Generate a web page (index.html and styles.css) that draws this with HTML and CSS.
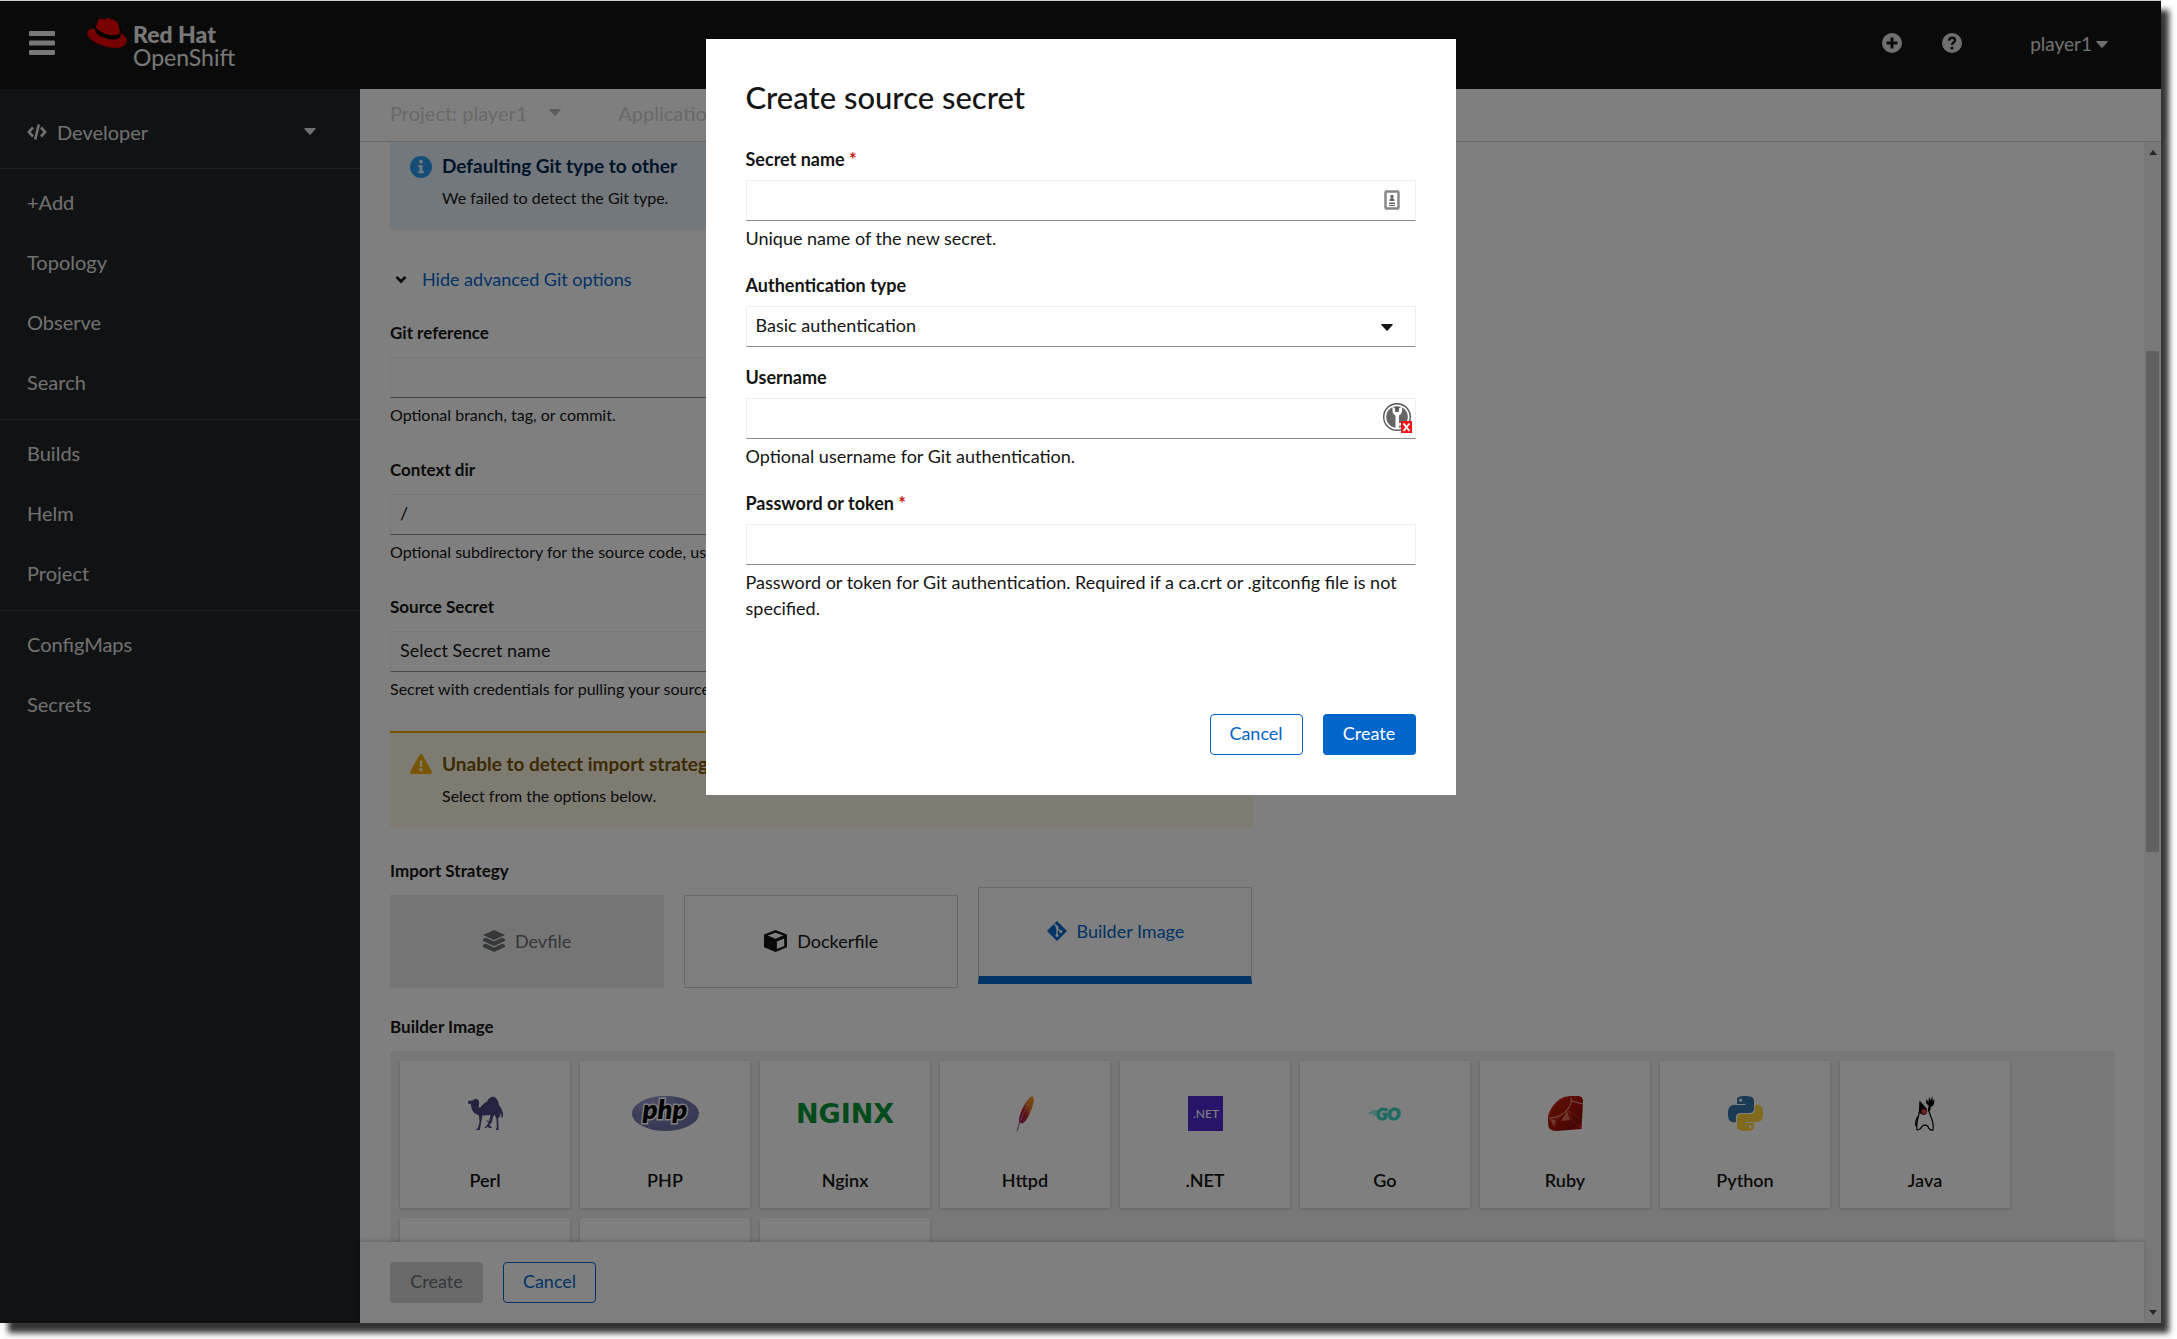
FILE: index.html
```
<!DOCTYPE html>
<html lang="en">
<head>
<meta charset="utf-8">
<title>Red Hat OpenShift - Import from Git</title>
<link rel="stylesheet" href="styles.css">
</head>
<body>
<svg class="sprite" aria-hidden="true">
  <symbol id="caret" viewBox="0 0 12 7"><path d="M.8 0h10.4q.9.3.4 1L6.6 6.6q-.6.6-1.2 0L.4 1Q0 .3.8 0z" fill="currentColor"/></symbol>
</svg>
<div class="window">
  <header class="masthead">
    <button class="icon-button menu-button" type="button" aria-label="Global navigation">
      <svg width="26" height="24" viewBox="0 0 26 24" fill="currentColor"><rect width="26" height="5" rx="1"/><rect y="9.500" width="26" height="5" rx="1"/><rect y="19" width="26" height="5" rx="1"/></svg>
    </button>
    <a class="brand" href="#">
      <svg width="40" height="30" viewBox="0 2.900 24 18.200"><path d="M4 8h16.500v9H9z" fill="#000"/><path fill="#e00" d="M16.009 13.386c1.577 0 3.86-.326 3.86-2.202a1.765 1.765 0 0 0-.04-.431l-.94-4.08c-.216-.898-.406-1.305-1.982-2.093-1.223-.625-3.888-1.658-4.676-1.658-.733 0-.947.946-1.822.946-.842 0-1.467-.706-2.255-.706-.757 0-1.250.515-1.630 1.576 0 0-1.060 2.990-1.197 3.424a.81.81 0 0 0-.028.245c0 1.162 4.577 4.974 10.710 4.974m4.101-1.435c.218 1.032.218 1.140.218 1.277 0 1.765-1.984 2.745-4.593 2.745-5.895.004-11.060-3.451-11.060-5.734a2.326 2.326 0 0 1 .19-.925C2.746 9.415 0 9.794 0 12.217c0 3.969 9.405 8.861 16.851 8.861 5.710 0 7.149-2.582 7.149-4.620 0-1.605-1.387-3.425-3.887-4.512"/></svg>
      <span class="brand-name"><strong>Red Hat</strong><span>OpenShift</span></span>
    </a>
    <div class="masthead-tools">
      <button class="icon-button" type="button" aria-label="Import">
        <svg width="20" height="20" viewBox="0 0 20 20"><circle cx="10" cy="10" r="10" fill="currentColor"/><path d="M10 4.500v11M4.500 10h11" stroke="#151515" stroke-width="3"/></svg>
      </button>
      <button class="icon-button" type="button" aria-label="Help">
        <svg width="20" height="20" viewBox="0 0 20 20"><circle cx="10" cy="10" r="10" fill="currentColor"/><path d="M6.900 7.600C7.600 3.700 13 4 13 7.300c0 2.400-3 2.100-3 4.600" fill="none" stroke="#151515" stroke-width="2.300"/><circle cx="10" cy="15" r="1.600" fill="#151515"/></svg>
      </button>
      <button class="user-menu" type="button">player1<svg width="12" height="7"><use href="#caret"/></svg></button>
    </div>
  </header>

  <div class="body">
    <nav class="sidebar">
      <button class="perspective" type="button">
        <svg width="20" height="16" viewBox="0 0 20 16" fill="none" stroke="currentColor" stroke-width="2.600"><path d="M6 3.500 1.900 8 6 12.500M14 3.500 18.100 8 14 12.500M11.800.5 8.200 15.500"/></svg>
        <span>Developer</span>
        <svg class="perspective-caret" width="12" height="7"><use href="#caret"/></svg>
      </button>
      <ul class="nav-group"><li><a href="#">+Add</a></li><li><a href="#">Topology</a></li><li><a href="#">Observe</a></li><li><a href="#">Search</a></li></ul>
      <ul class="nav-group"><li><a href="#">Builds</a></li><li><a href="#">Helm</a></li><li><a href="#">Project</a></li></ul>
      <ul class="nav-group"><li><a href="#">ConfigMaps</a></li><li><a href="#">Secrets</a></li></ul>
    </nav>

    <main class="main">
      <div class="context-bar">
        <button type="button" disabled>Project: player1<svg width="12" height="7"><use href="#caret"/></svg></button>
        <button type="button" disabled>Application: All applications<svg width="12" height="7"><use href="#caret"/></svg></button>
      </div>
      <div class="content">
        <div class="page">
          <form class="import-form">
            <section class="alert alert-info">
              <svg width="22" height="22" viewBox="0 0 22 22"><circle cx="11" cy="11" r="11" fill="#2b9af3"/><circle cx="11" cy="5.700" r="1.900" fill="#e7f1fa"/><path d="M8.200 9h4.300v6h1.300v2.200H8.200V15h1.300v-3.800H8.200z" fill="#e7f1fa"/></svg>
              <div><h4>Defaulting Git type to other</h4><p>We failed to detect the Git type.</p></div>
            </section>
            <button class="toggle" type="button"><svg width="12" height="9" viewBox="0 0 12 9"><path d="m1.500 1.800 4.500 4.700 4.500-4.700" fill="none" stroke="#151515" stroke-width="2.600"/></svg><span>Hide advanced Git options</span></button>
            <div class="field">
              <label for="git-ref">Git reference</label>
              <div class="control"><input id="git-ref" type="text"></div>
              <p class="help">Optional branch, tag, or commit.</p>
            </div>
            <div class="field">
              <label for="context-dir">Context dir</label>
              <div class="control"><input id="context-dir" type="text" value="/"></div>
              <p class="help">Optional subdirectory for the source code, used as a context directory for build.</p>
            </div>
            <div class="field">
              <label for="source-secret">Source Secret</label>
              <div class="control"><select id="source-secret"><option>Select Secret name</option></select><svg class="select-caret" width="12" height="7"><use href="#caret"/></svg></div>
              <p class="help">Secret with credentials for pulling your source code.</p>
            </div>
            <section class="alert alert-warning">
              <svg width="22" height="20" viewBox="0 0 22 20"><path d="M9.500.9q1.500-1.800 3 0l9.200 16.500q.8 2-1.400 2.600H1.700q-2.200-.6-1.400-2.600z" fill="#f0ab00"/><path d="M9.600 6.500h2.800l-.4 6.500h-2z" fill="#fdf7e7"/><circle cx="11" cy="15.800" r="1.700" fill="#fdf7e7"/></svg>
              <div><h4>Unable to detect import strategy</h4><p>Select from the options below.</p></div>
            </section>
            <h3 class="group-label">Import Strategy</h3>
            <div class="tiles">
              <button class="tile tile-disabled" type="button" disabled>
                <svg width="22" height="22" viewBox="0 0 22 22" fill="currentColor"><path d="M11 0 22 5 11 10 0 5zM0 9l2.700-1.200L11 11.600l8.300-3.800L22 9v2l-11 5L0 11zM0 15l2.700-1.200L11 17.600l8.300-3.800L22 15v2l-11 5L0 17z"/></svg>Devfile
              </button>
              <button class="tile" type="button">
                <svg width="23" height="22" viewBox="0 0 23 22"><path d="M11.500 0 23 4.500v12.700L11.500 22 0 17.200V4.500z" fill="#151515"/><path d="M11.500 2.800 19.300 5.600 11.500 8.800 3.700 5.600zM12.900 11.400l7.300-3v7.500l-7.300 3z" fill="#fff"/></svg>Dockerfile
              </button>
              <button class="tile tile-selected" type="button">
                <svg width="20" height="20" viewBox="0 0 20 20"><path d="M10 0l10 10-10 10L0 10z" fill="currentColor"/><path d="M7.500 3 10 5.700V15M10 7l4 4" stroke="#fff" stroke-width="1.400" fill="none"/><circle cx="10" cy="6" r="1.500" fill="#fff"/><circle cx="10" cy="14.500" r="1.500" fill="#fff"/><circle cx="13.800" cy="10.500" r="1.500" fill="#fff"/></svg>Builder Image
              </button>
            </div>
            <h3 class="group-label">Builder Image</h3>
            <div class="catalog">
              <button class="card" type="button">
                <svg width="35" height="33" viewBox="0 0 35 33" fill="#484880"><path d="M0 4.500 2 3.600 5 3.500Q6.500 1 9 2.200L11 4Q11.500 7 10.500 9.500 11.500 12 13.500 9 16 5.500 19 4.500 22-1 26.500 0 30 2 31 8L33.500 12Q35.500 15 34.800 20L33.500 21 33 15.500 32 19 30.200 21.500 30.500 31.500 31 33H27.500L28.800 30.500 28.500 22 26.500 17.500 25 20 24 25 21.500 28 24 31H21L19.500 29.500 18 31H16.500L20.500 26 18 23 21 24.500 22.500 18 14.500 18.500 13.500 24 12 31.500V33H7.500L10 31 11.500 25 11 18.500 7 16.500Q3.500 14 2.700 7L0 6.500z"/></svg>
                <span>Perl</span>
              </button>
              <button class="card" type="button">
                <svg width="67" height="35" viewBox="0 0 67 35"><defs><radialGradient id="php-fill" cx=".3" cy=".2" r=".8"><stop offset="0" stop-color="#9a9cd0"/><stop offset=".5" stop-color="#7b7db5"/><stop offset="1" stop-color="#7173aa"/></radialGradient></defs><ellipse cx="33.500" cy="17.500" rx="33.500" ry="17.500" fill="url(#php-fill)"/><text class="php-text" x="33" y="23" text-anchor="middle">php</text></svg>
                <span>PHP</span>
              </button>
              <button class="card" type="button">
                <svg width="98" height="35" viewBox="0 0 98 35"><text class="nginx-text" x="49" y="27" text-anchor="middle">NGINX</text></svg>
                <span>Nginx</span>
              </button>
              <button class="card" type="button">
                <svg width="18" height="35" viewBox="0 0 18 35"><defs><linearGradient id="feather" x1="1" y1="0" x2="0" y2="1"><stop offset="0" stop-color="#f69923"/><stop offset=".3" stop-color="#e97826"/><stop offset=".5" stop-color="#be202e"/><stop offset=".75" stop-color="#9e2064"/><stop offset="1" stop-color="#662d91"/></linearGradient></defs><path d="M16 0q2.500 1.500 1.700 6-.7 4-4 11.500Q10.500 25 6.500 27.500L4 27 1.500 35H.6L3 26.500Q2.500 21 6 13.500 10.500 3.500 16 0z" fill="url(#feather)"/><path d="M14.500 4Q9 13 4.500 24.500L1 35" fill="none" stroke="#d9b8c8" stroke-width=".7" stroke-dasharray="3 1"/></svg>
                <span>Httpd</span>
              </button>
              <button class="card" type="button">
                <svg width="35" height="35" viewBox="0 0 35 35"><path d="M0 0h35v35H0z" fill="#512bd4"/><text class="net-text" x="18" y="22" text-anchor="middle">.NET</text></svg>
                <span>.NET</span>
              </button>
              <button class="card" type="button">
                <svg width="32" height="35" viewBox="0 0 32 35"><path d="M2 15h6M0 17h7M4 19h3" stroke="#35d6c4" stroke-width="1"/><text class="go-text" x="7" y="24">GO</text></svg>
                <span>Go</span>
              </button>
              <button class="card" type="button">
                <svg width="35" height="35" viewBox="0 0 35 35"><defs><linearGradient id="ruby" x1="0" y1="0" x2="1" y2="1"><stop offset="0" stop-color="#d83020"/><stop offset=".5" stop-color="#b01208"/><stop offset=".8" stop-color="#8c0c04"/><stop offset="1" stop-color="#d81808"/></linearGradient></defs><path d="M22 0h9q4 1 4 5l-1.500 28L8 35q-8 0-8-8v-7Q3 9 12 3q5-3 10-3z" fill="url(#ruby)"/><path d="M2 21Q4 11 12 5q7-5 10-3 2 3-3 10-8 9-17 9z" fill="#b01a08"/><path d="M1.500 22Q12 22 19.500 13.500 24.500 7 23 2M24 5l11 3" fill="none" stroke="#f0b0a0" stroke-width="1"/><path d="m20 14-11.500 9-2 11M20 14l5 11 9 8M20 14l14 10" fill="none" stroke="#d86050" stroke-width=".5"/><path d="m2 23 5.500 1L6 31zM19 15l3 9-9 1z" fill="#e07060"/></svg>
                <span>Ruby</span>
              </button>
              <button class="card" type="button">
                <svg width="35" height="35" viewBox="0 0 24 24"><path fill="#3776ab" d="M14.250.18l.9.2.73.26.59.3.45.32.34.34.25.34.16.33.1.3.04.26.02.2-.01.13V8.500l-.05.63-.13.55-.21.46-.26.38-.3.31-.33.25-.35.19-.35.14-.33.1-.3.07-.26.04-.21.02H8.770l-.69.05-.59.14-.5.22-.41.27-.33.32-.27.35-.2.36-.15.37-.1.35-.07.32-.04.27-.02.21v3.060H3.170l-.21-.03-.28-.07-.32-.12-.35-.18-.36-.26-.36-.36-.35-.46-.32-.59-.28-.73-.21-.88-.14-1.050-.05-1.230.06-1.220.16-1.040.24-.87.32-.71.36-.57.4-.44.42-.33.42-.24.4-.16.36-.1.32-.05.24-.01h.16l.06.01h8.160v-.83H6.180l-.01-2.750-.02-.37.05-.34.11-.31.17-.28.25-.26.31-.23.38-.2.44-.18.51-.15.58-.12.64-.1.71-.06.77-.04.84-.02 1.270.05zm-6.300 1.980l-.23.33-.08.41.08.41.23.34.33.22.41.09.41-.09.33-.22.23-.34.08-.41-.08-.41-.23-.33-.33-.22-.41-.09-.41.09z"/><path fill="#ffd43b" d="M21.040 6.110l.28.06.32.12.35.18.36.27.36.35.35.47.32.59.28.73.21.88.14 1.040.05 1.230-.06 1.230-.16 1.040-.24.86-.32.71-.36.57-.4.45-.42.33-.42.24-.4.16-.36.09-.32.05-.24.02-.16-.01h-8.220v.82h5.840l.01 2.760.02.36-.05.34-.11.31-.17.29-.25.25-.31.24-.38.2-.44.17-.51.15-.58.13-.64.09-.71.07-.77.04-.84.01-1.270-.04-1.070-.14-.9-.2-.73-.25-.59-.3-.45-.33-.34-.34-.25-.34-.16-.33-.1-.3-.04-.25-.02-.2.01-.13v-5.340l.05-.64.13-.54.21-.46.26-.38.3-.32.33-.24.35-.2.35-.14.33-.1.3-.06.26-.04.21-.02.13-.01h5.840l.69-.05.59-.14.5-.21.41-.28.33-.32.27-.35.2-.36.15-.36.1-.35.07-.32.04-.28.02-.21V6.070h2.090l.14.01zm-6.470 14.250l-.23.33-.08.41.08.41.23.33.33.23.41.08.41-.08.33-.23.23-.33.08-.41-.08-.41-.23-.33-.33-.23-.41-.08-.41.08z"/></svg>
                <span>Python</span>
              </button>
              <button class="card" type="button">
                <svg width="20" height="35" viewBox="0 0 20 35"><path d="M4.500 4.500 12 13 9 19 3.800 17z"/><path d="M11 7 11.500 3l2 3L14 .5l1.500 4L17.500 0v5l2-2-.5 5q-1 2.500-3 2.500L15 15l-2-1 1-4z"/><path d="M4.200 16 3.500 20Q1 29 2 34q3 0 5-3.500 3-3 6 0 1.500 4.500 5 3.500 1-6-2-13l-2.500-7 1-4M3.500 20Q.5 23 .5 29l1 1" fill="none" stroke="#000" stroke-width="1.200"/><circle cx="9" cy="15.500" r="2.900" fill="#e3483f" stroke="#000" stroke-width=".6"/></svg>
                <span>Java</span>
              </button>
              <button class="card" type="button" aria-label="Node.js"></button>
              <button class="card" type="button" aria-label="Modern web applications"></button>
              <button class="card" type="button" aria-label="Mirror server"></button>
            </div>
          </form>
          <footer class="form-footer">
            <button class="button button-disabled" type="button" disabled>Create</button>
            <button class="button button-secondary" type="button">Cancel</button>
          </footer>
        </div>
        <div class="scrollbar" aria-hidden="true"><i class="arrow-up"></i><i class="thumb"></i><i class="arrow-down"></i></div>
      </div>
    </main>
  </div>

  <div class="backdrop">
    <form class="modal" role="dialog" aria-labelledby="modal-title">
      <h1 id="modal-title">Create source secret</h1>
      <div class="modal-fields">
        <div class="field">
          <label for="secret-name">Secret name <span class="required">*</span></label>
          <div class="control"><input id="secret-name" type="text">
            <svg class="contact-icon" width="16" height="20" viewBox="0 0 16 20"><rect x="1.500" y="1.500" width="13" height="17" rx="1" fill="#fff" stroke="#858585" stroke-width="2.400"/><circle cx="8" cy="6.500" r="1.700" fill="#666"/><path d="M5.500 11q0-3 2.500-3t2.500 3zM5 12.500h6V14H5zM5 15h6v1H5z" fill="#666"/></svg>
          </div>
          <p class="help">Unique name of the new secret.</p>
        </div>
        <div class="field">
          <label for="auth-type">Authentication type</label>
          <div class="control"><select id="auth-type"><option>Basic authentication</option><option>SSH key</option></select><svg class="select-caret" width="12" height="7"><use href="#caret"/></svg></div>
        </div>
        <div class="field">
          <label for="username">Username</label>
          <div class="control"><input id="username" type="text">
            <svg class="key-icon" width="30" height="30" viewBox="0 0 30 30"><circle cx="14" cy="14" r="13.300" fill="#fff" stroke="#555" stroke-width="1.400"/><circle cx="14" cy="14" r="10.800" fill="#666"/><path d="M9.500 3.500v5q.5 3 3 4V25h3.500v-2.500h2V20h-2v-7.500q2.500-1 3-4v-5l-3 2v3q-2 1.500-4 0v-3z" fill="#fff"/><path d="M12 4h4l-2 3z" fill="#555"/><path d="M18 18h11v12H18z" fill="#f01414"/><path d="m20.500 20.500 6 7.500m0-7.500-6 7.500" stroke="#fff" stroke-width="2"/></svg>
          </div>
          <p class="help">Optional username for Git authentication.</p>
        </div>
        <div class="field">
          <label for="password">Password or token <span class="required">*</span></label>
          <div class="control"><input id="password" type="password"></div>
          <p class="help">Password or token for Git authentication. Required if a ca.crt or .gitconfig file is not specified.</p>
        </div>
      </div>
      <div class="modal-actions">
        <button class="button button-secondary" type="button">Cancel</button>
        <button class="button button-primary" type="submit">Create</button>
      </div>
    </form>
  </div>
</div>
</body>
</html>
```
FILE: styles.css
```
* { box-sizing: border-box; }

body {
  margin: 0;
  height: 100vh;
  padding: 0 16px 16px 0;
  overflow: hidden;
  background: #fff;
  color: #151515;
  font: 18px/26px Lato, "Open Sans", sans-serif;
}

h1, h3, h4, p, ul { margin: 0; padding: 0; }
ul { list-style: none; }
a { color: inherit; text-decoration: none; }
svg { flex: none; display: block; overflow: visible; }
button, input, select { font: inherit; color: inherit; }
button { border: 0; background: none; padding: 0; }

.sprite { position: absolute; width: 0; height: 0; }

.window {
  position: relative;
  display: flex;
  flex-direction: column;
  height: 100%;
  border-top: 1px solid #c8cfcc;
  box-shadow: 8px 10px 6px rgba(0, 0, 0, .8);
}

/* Masthead */
.masthead {
  display: flex;
  flex: none;
  align-items: center;
  height: 88px;
  padding: 0 53px 4px 29px;
  background: #151515;
  color: #f0f0f0;
}
.icon-button { display: flex; }
.brand { display: flex; gap: 6px; margin-left: 32px; }
.brand-name { display: flex; flex-direction: column; padding-top: 5px; font-size: 23px; line-height: 23px; }
.brand-name strong { font-weight: 900; }
.masthead-tools { display: flex; align-items: center; gap: 40px; margin-left: auto; color: #e0e0e0; }
.user-menu { display: flex; align-items: center; gap: 4px; margin-left: 28px; padding-top: 2px; font-size: 19px; }

.body { display: flex; flex: 1; min-height: 0; }

/* Sidebar */
.sidebar { flex: none; width: 360px; background: #212427; color: #e0e0e0; font-size: 20px; }
.perspective {
  display: flex;
  align-items: center;
  gap: 10px;
  width: 100%;
  height: 80px;
  padding: 6px 44px 0 27px;
  border-bottom: 1px solid #3c3f42;
}
.perspective-caret { margin-left: auto; }
.nav-group { padding: 5px 0; border-bottom: 1px solid #3c3f42; }
.nav-group:last-child { border: 0; }
.nav-group a { display: block; padding: 0 27px 4px; line-height: 56px; }

/* Main column */
.main { display: flex; flex: 1; flex-direction: column; min-width: 0; background: #fff; }
.context-bar {
  display: flex;
  flex: none;
  gap: 57px;
  height: 53px;
  padding: 0 30px 5px;
  border-bottom: 1px solid #d2d2d2;
  font-size: 20px;
}
.context-bar button { display: flex; align-items: center; gap: 22px; color: #d2d2d2; }
.context-bar svg { color: #b8b8b8; }
.content { display: flex; flex: 1; min-height: 0; }
.page { display: flex; flex: 1; flex-direction: column; min-width: 0; }

.import-form { flex: 1; min-height: 0; overflow: hidden; padding: 0 29px 0 30px; }

.alert {
  display: flex;
  gap: 10px;
  width: 50%;
  padding: 18px 20px 19px;
  border-top: 2px solid;
}
.alert svg { margin-top: 3px; }
.alert p { margin-top: 6px; font-size: 16px; }
.alert h4 { font-size: 19px; font-weight: 700; white-space: nowrap; }
.alert-info { margin-top: -9px; border-color: #2b9af3; background: #e7f1fa; }
.alert-info h4 { color: #002952; }
.alert-warning { margin-top: 25px; border-color: #f0ab00; background: #fdf7e7; }
.alert-warning h4 { color: #795600; }

.toggle { display: flex; align-items: center; gap: 15px; margin: 36px 0 28px; padding-left: 5px; color: #06c; }

/* Form fields */
.field label { display: block; margin-bottom: 8px; font-weight: 700; line-height: 25px; }
.control { position: relative; }
.control input,
.control select {
  display: block;
  width: 100%;
  height: 41px;
  padding: 0 9px 3px;
  border: 1px solid #f0f0f0;
  border-bottom-color: #8a8d90;
  border-radius: 0;
  outline: 0;
  background: #fff;
  appearance: none;
}
.help { padding: 4px 0; }
.required { color: #c9190b; }
.select-caret { position: absolute; top: 18px; right: 23px; }
.contact-icon { position: absolute; top: 10px; right: 16px; }
.key-icon { position: absolute; top: 5px; right: 3px; }

.import-form .field { width: 50%; }
.import-form .field + .field { margin-top: 25px; }
.import-form .field label { margin-bottom: 12px; font-size: 17px; }
.import-form .help { font-size: 16px; }

.group-label { margin: 30px 0 11px; font-size: 17px; font-weight: 700; }

.tiles { display: grid; grid-template-columns: repeat(3, 1fr); gap: 20px; align-items: start; width: 50%; height: 93px; }
.tile {
  display: flex;
  align-items: center;
  justify-content: center;
  gap: 10px;
  height: 93px;
  padding-bottom: 2px;
  border: 1px solid #d2d2d2;
}
.tile-disabled { border-color: #ebebeb; background: #ebebeb; color: #6a6e73; }
.tile-selected { height: 97px; margin-top: -8px; border-bottom: 8px solid #06c; color: #06c; }
.tiles + .group-label { margin-top: 26px; }

.catalog {
  display: grid;
  grid-template-columns: repeat(auto-fill, 170px);
  grid-auto-rows: 147px;
  gap: 10px;
  padding: 10px;
  background: #f0f0f0;
}
.card {
  display: flex;
  flex-direction: column;
  align-items: center;
  justify-content: space-between;
  padding: 35px 8px 15px;
  background: #fff;
  box-shadow: 0 1px 3px rgba(3, 3, 3, .2);
  font-weight: 600;
}
.card svg { height: 35px; }
.card text { font-family: Lato, sans-serif; }
.card .php-text { font: italic 800 27px Lato, sans-serif; stroke: #fff; stroke-width: 3px; paint-order: stroke; }
.card .nginx-text { font: 700 27px "DejaVu Sans", sans-serif; fill: #009639; }
.card .net-text { font-size: 12px; font-weight: 500; fill: #fff; }
.card .go-text { font: italic 900 17px Lato, sans-serif; fill: #35d6c4; stroke: #35d6c4; stroke-width: 1px; }

.form-footer {
  position: relative;
  display: flex;
  flex: none;
  gap: 20px;
  padding: 20px 30px;
  background: #fff;
  box-shadow: 0 -2px 4px rgba(3, 3, 3, .16);
}

.button { min-width: 93px; height: 41px; padding: 0 18px 3px; border: 1px solid transparent; border-radius: 4px; }
.button-primary { background: #06c; color: #fff; }
.button-secondary { border-color: #06c; background: #fff; color: #06c; }
.button-disabled { background: #d2d2d2; color: #6a6e73; }

/* Scrollbar column */
.scrollbar {
  display: flex;
  flex: none;
  flex-direction: column;
  align-items: center;
  width: 17px;
  padding: 8px 0;
  background: #f1f1f1;
}
.arrow-up, .arrow-down { border: 4px solid transparent; }
.arrow-up { border-top: 0; border-bottom: 5px solid #505050; }
.arrow-down { border-bottom: 0; border-top: 5px solid #505050; margin-top: auto; }
.thumb { width: 13px; height: 43%; margin-top: 196px; background: #c1c1c1; }

/* Modal */
.backdrop {
  position: absolute;
  inset: 0;
  display: flex;
  align-items: flex-start;
  justify-content: center;
  background: rgba(0, 0, 0, .5);
}
.modal { width: 750px; margin-top: 38px; padding: 40px; background: #fff; }
.modal h1 { margin-bottom: 31px; font-size: 31px; font-weight: 500; line-height: 37px; }
.modal-fields { display: grid; gap: 18px; }
.modal-actions { display: flex; justify-content: flex-end; gap: 20px; margin-top: 89px; }
```
